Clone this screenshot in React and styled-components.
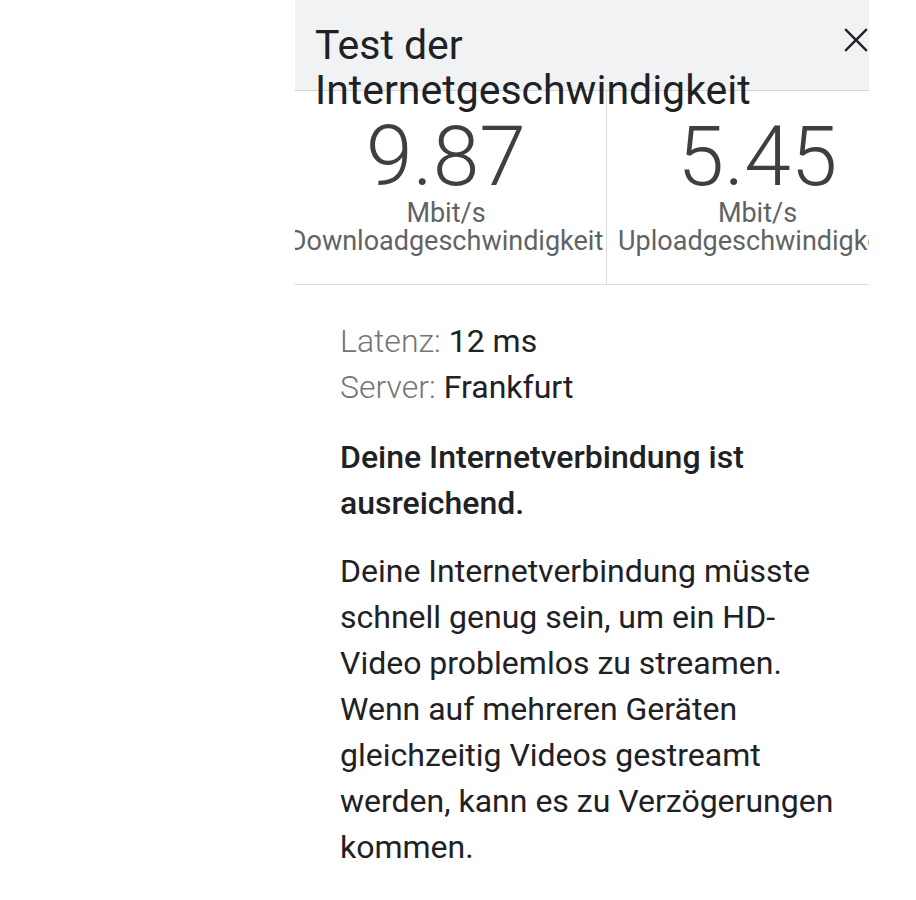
import React from 'react';
import styled, { createGlobalStyle } from 'styled-components';

const GlobalStyle = createGlobalStyle`
  html, body {
    margin: 0;
    padding: 0;
    background: #ffffff;
  }
  body {
    font-family: Roboto, "Noto Sans", "Liberation Sans", sans-serif;
    color: #202124;
  }
`;

//the visible part of the dialog, cut off on both sides
const Panel = styled.div`
  margin-left: 295px;
  width: 574px;
  overflow: hidden;
  min-height: 900px;
`;

const Header = styled.div`
  position: relative;
  height: 91px;
  box-sizing: border-box;
  padding: 23px 0 0 20px;
  background: #f1f2f4;
  border-bottom: 1px solid #d2d4d7;
`;

const Title = styled.h1`
  margin: 0;
  font-size: 41px;
  line-height: 45px;
  font-weight: 400;
  color: #202124;
  white-space: nowrap;
`;

const Close = styled.button`
  position: absolute;
  top: 24px;
  right: -3px;
  width: 32px;
  height: 32px;
  padding: 0;
  border: 0;
  background: transparent;
  display: flex;
  align-items: center;
  justify-content: center;
  cursor: pointer;
`;

const Stats = styled.div`
  display: grid;
  grid-template-columns: 320px 302px;
  margin-left: -9px;
  border-bottom: 1px solid #dadce0;
`;

const Stat = styled.div`
  padding: 24px 0 29px;
  text-align: center;
  white-space: nowrap;
  border-left: ${p => (p.$divided ? '1px solid #dadce0' : 'none')};
  display: flex;
  flex-direction: column;
  align-items: center;
`;

const Value = styled.div`
  font-size: 84px;
  line-height: 84px;
  font-weight: 300;
  color: #3c4043;
`;

const Label = styled.div`
  font-size: 27px;
  line-height: 28px;
  color: #5f6368;
`;

const Body = styled.div`
  padding: 33px 0 0 45px;
  width: 500px;
  font-size: 32px;
  line-height: 46px;
`;

const InfoRow = styled.div`
  color: #202124;
`;

const InfoKey = styled.span`
  font-weight: 300;
  color: #757575;
`;

const Verdict = styled.p`
  margin: 24px 0 0;
  font-weight: 500;
  color: #202124;
`;

const Description = styled.p`
  margin: 22px 0 0;
  color: #202124;
`;

const stats = [
  { value: '9.87', unit: 'Mbit/s', label: 'Downloadgeschwindigkeit' },
  { value: '5.45', unit: 'Mbit/s', label: 'Uploadgeschwindigkeit' }
];

export default function App() {
  return (
    <>
      <GlobalStyle />
      <Panel>
        <Header>
          <Title>
            Test der
            <br />
            Internetgeschwindigkeit
          </Title>
          <Close aria-label="Schließen">
            <svg width="26" height="26" viewBox="0 0 24 24">
              <path d="M2 2 L22 22 M22 2 L2 22" stroke="#202124" strokeWidth="2.2" fill="none" />
            </svg>
          </Close>
        </Header>
        <Stats>
          {stats.map((s, i) => (
            <Stat key={s.label} $divided={i > 0}>
              <Value>{s.value}</Value>
              <Label>{s.unit}</Label>
              <Label>{s.label}</Label>
            </Stat>
          ))}
        </Stats>
        <Body>
          <InfoRow>
            <InfoKey>Latenz:</InfoKey> 12 ms
          </InfoRow>
          <InfoRow>
            <InfoKey>Server:</InfoKey> Frankfurt
          </InfoRow>
          <Verdict>Deine Internetverbindung ist ausreichend.</Verdict>
          <Description>
            Deine Internetverbindung müsste schnell genug sein, um ein HD-Video problemlos zu streamen.
            Wenn auf mehreren Geräten gleichzeitig Videos gestreamt werden, kann es zu Verzögerungen
            kommen.
          </Description>
        </Body>
      </Panel>
    </>
  );
}
